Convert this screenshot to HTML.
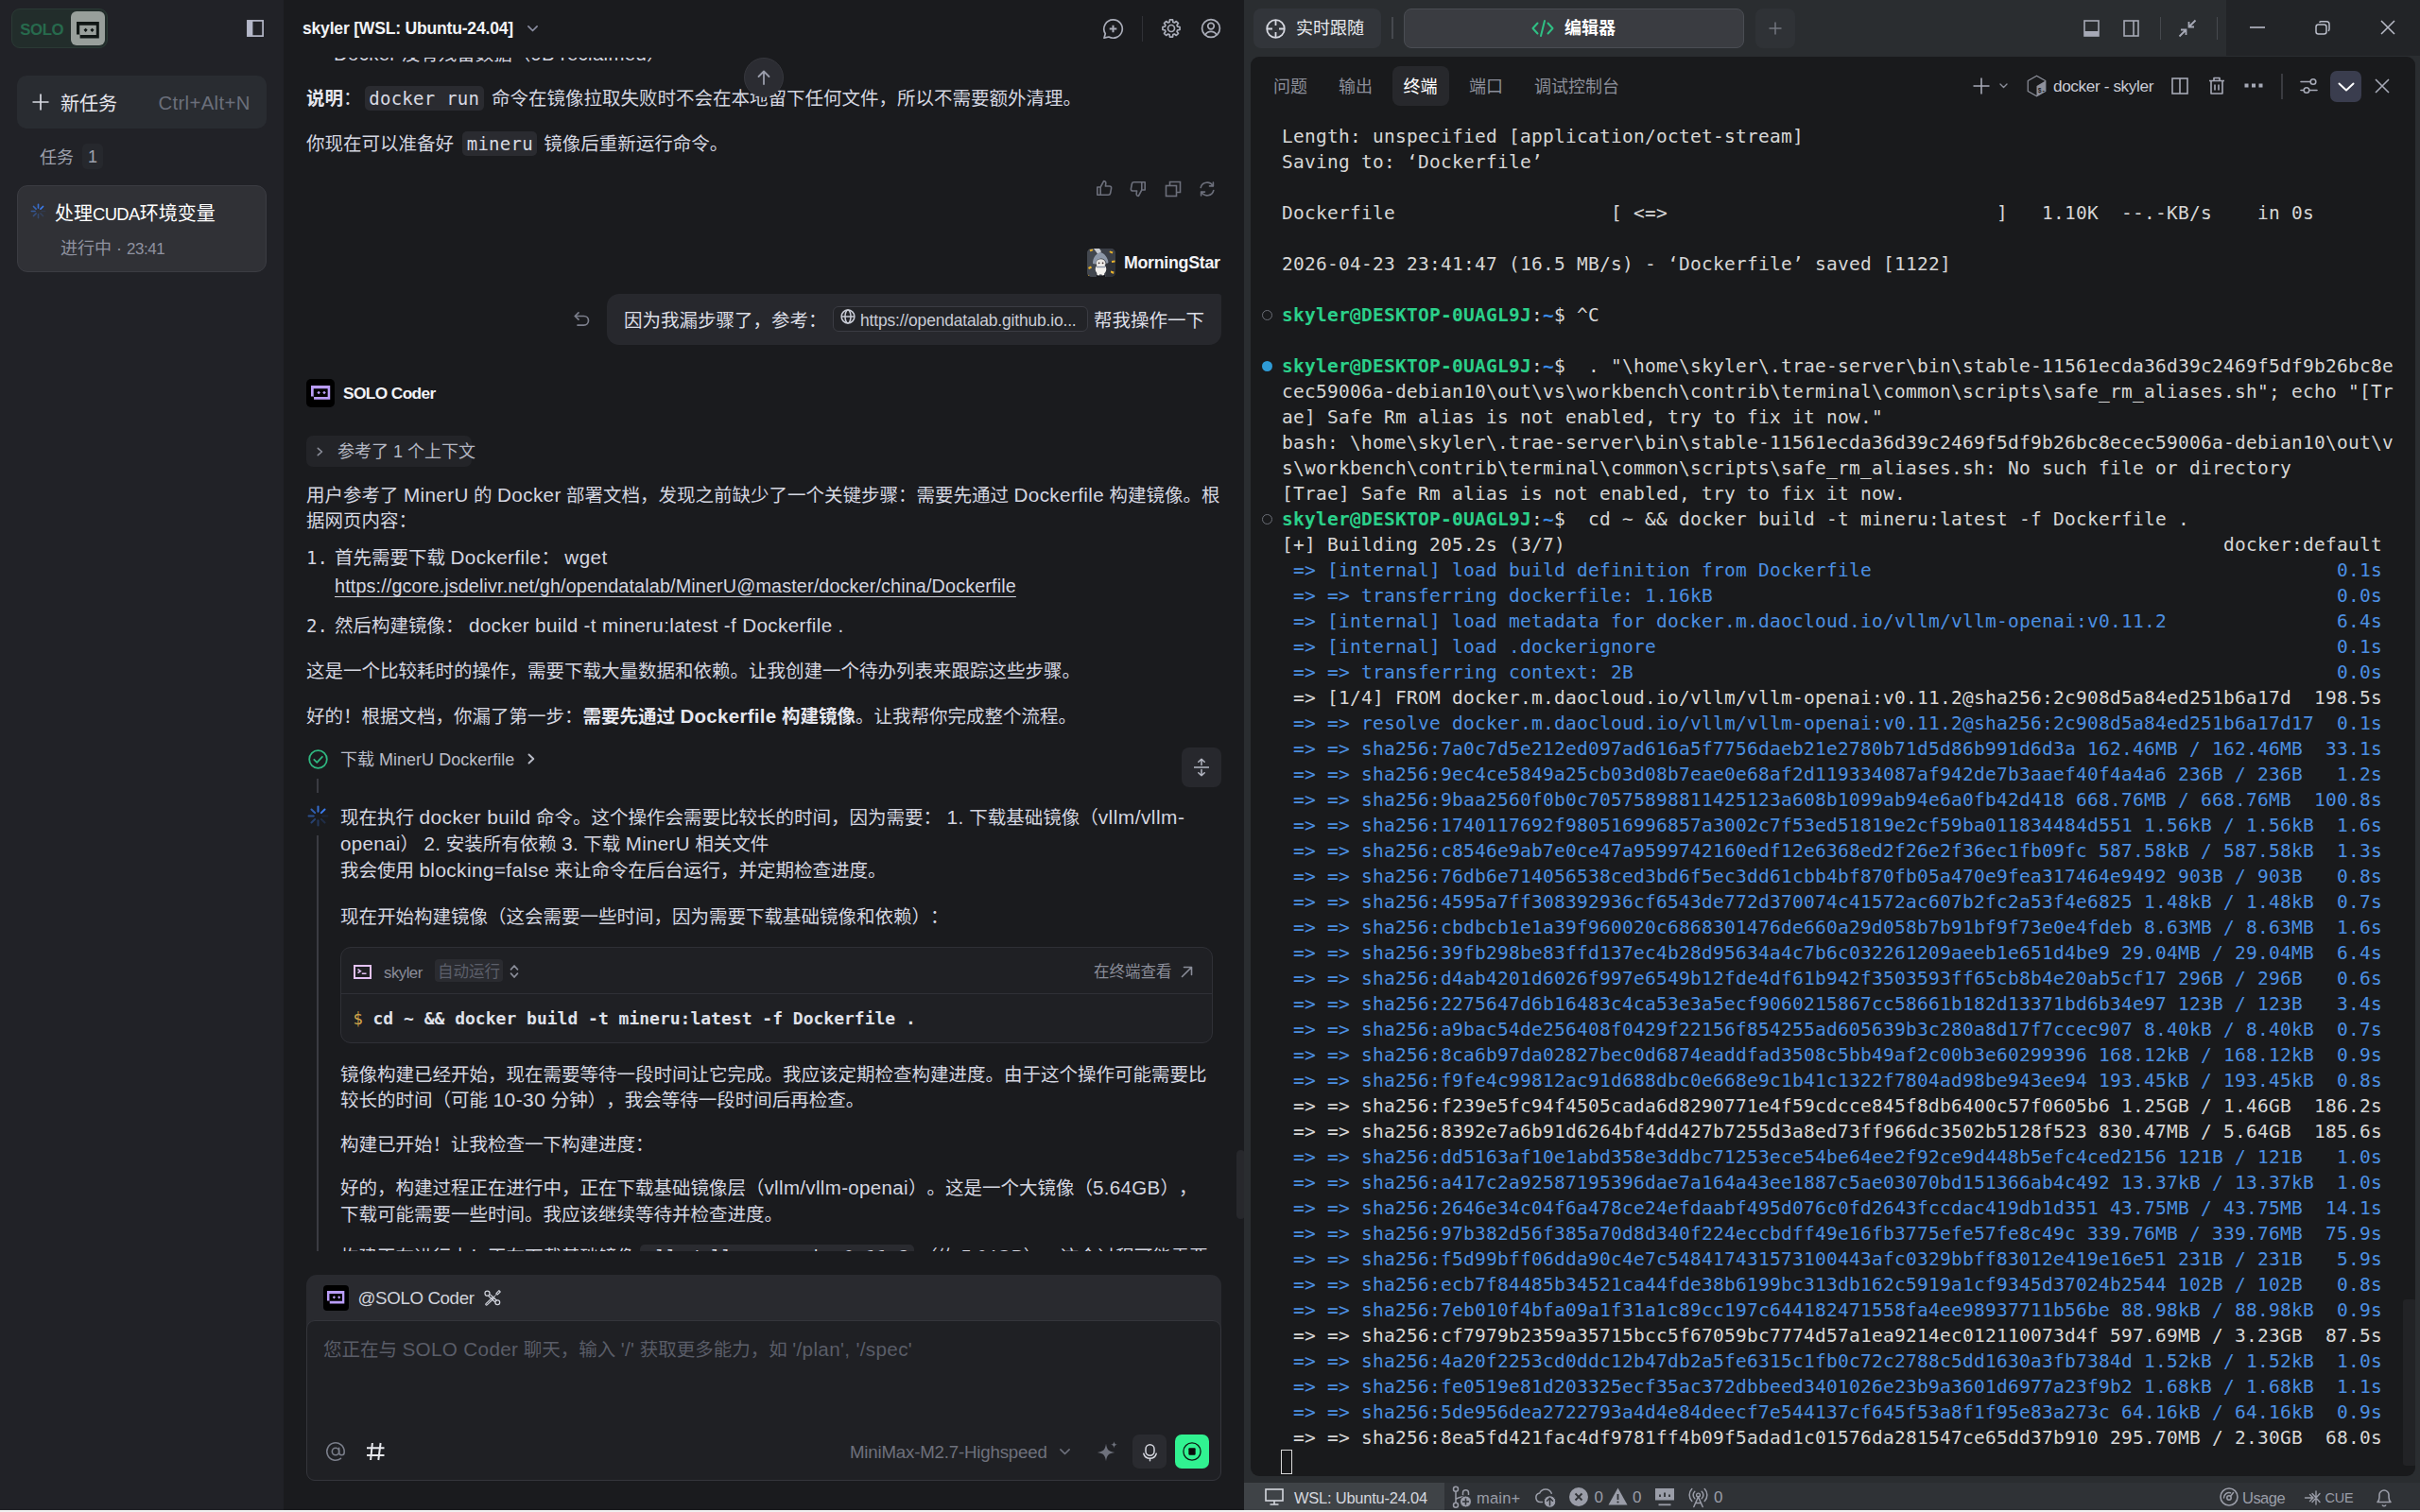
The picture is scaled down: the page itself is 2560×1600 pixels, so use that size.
<!DOCTYPE html>
<html lang="zh-CN"><head><meta charset="utf-8"><title>SOLO</title>
<style>
*{box-sizing:border-box;margin:0;padding:0}
html,body{width:2560px;height:1600px;overflow:hidden;background:#1a1b1e}
body{position:relative;text-spacing-trim:space-all;font-family:"Liberation Sans","Noto Sans CJK SC",sans-serif;color:#d4d6e0;font-size:19.5px;-webkit-font-smoothing:antialiased}
.abs{position:absolute}
svg{display:block;overflow:visible}
.mono{font-family:"DejaVu Sans Mono","Liberation Mono",monospace}
.nw{white-space:nowrap}
/* ---------- sidebar ---------- */
#sidebar{position:absolute;left:0;top:0;width:300px;height:1598px;background:#212227}
#solo{position:absolute;left:12px;top:9px;width:102px;height:42px;border-radius:9px;background:#222d2b;border:1px solid #2b3a35}
#solo .t{position:absolute;left:8.300px;top:0;height:40px;line-height:41px;font-size:19px;font-weight:bold;color:#276a4d;}
#solo .k{position:absolute;left:62px;top:2px;width:36.3px;height:36.3px;border-radius:6px;background:#989f9b}
#sbtog{position:absolute;left:261px;top:21px}
#newtask{position:absolute;left:18px;top:80px;width:264px;height:56px;border-radius:10px;background:#292c31}
#newtask .p{position:absolute;left:16px;top:19px}
#newtask .t{position:absolute;left:46px;top:0;line-height:60px;font-size:20px;color:#e6e7ee}
#newtask .s{position:absolute;right:17.300px;top:0;line-height:59.500px;font-size:19.5px;color:#6b6f7b;}
#tasklbl{position:absolute;left:42px;top:153.500px;line-height:27px;font-size:18px;color:#9da0ac}
#taskcnt{position:absolute;left:87px;top:152px;width:22px;height:27px;border-radius:5px;background:#26282d;color:#9da0ac;font-size:18px;line-height:28.500px;text-align:center}
#task{position:absolute;left:18px;top:196px;width:264px;height:92px;border-radius:11px;background:#303136;border:1px solid #3b3c42}
#task .sp{position:absolute;left:14px;top:19px}
#task .t{position:absolute;left:39px;top:15px;line-height:28px;font-size:20px;color:#fff;white-space:nowrap}
#task .s{position:absolute;left:45px;top:52px;line-height:28px;font-size:18px;color:#8f92a0;white-space:nowrap}
/* ---------- chat ---------- */
#chat{position:absolute;left:300px;top:0;width:1016px;height:1598px;background:#1a1b1e;overflow:hidden}
#chat .hd{position:absolute;left:20px;top:15px;line-height:30px;font-size:18.5px;font-weight:bold;color:#f2f3f7;white-space:nowrap;}
#msgs{position:absolute;left:0;top:60.8px;width:1016px;height:1263.7px;overflow:hidden}
#msgs .in{position:absolute;left:0;top:-60.8px;width:1016px}
.ln{position:absolute;white-space:nowrap;line-height:28px;height:28px;color:#d4d6e0;font-size:19.5px}
.ln b{color:#e6e7ef}
.ln u{text-underline-offset:3.5px;text-decoration-thickness:1.2px}
.l{letter-spacing:0}
code{font-family:"DejaVu Sans Mono","Liberation Mono",monospace;font-size:19px;background:#2a2b30;border-radius:5px;padding:2px 4.3px 2px;letter-spacing:0.26px;color:#d8dae3}
.ic{position:absolute}
#totop{position:absolute;left:487px;top:61px;width:42px;height:42px;border-radius:21px;background:#2b2c32;border:1px solid #36373d}
#bubble{position:absolute;left:342px;top:311px;width:650px;height:54px;border-radius:13px 3px 13px 13px;background:#27282d}
#chip{position:absolute;left:581px;top:323.800px;width:269.500px;height:27.500px;border-radius:6px;border:1px solid #3b3c43;background:#222327}
#ctx{position:absolute;left:24px;top:461px;width:175px;height:33px;border-radius:7px;background:#232428}
#ava1{position:absolute;left:24px;top:401px;width:30px;height:30px;border-radius:5px;background:#000}
#ava0{position:absolute;left:850px;top:263px;width:30px;height:30px;border-radius:5px;background:#3a3d44;overflow:hidden}
#vline{position:absolute;left:35px;top:884px;width:1.5px;height:460px;background:#3a3b42}
#vline0{position:absolute;left:35px;top:824px;width:1.5px;height:14.500px;background:#3a3b42}
#collapse{position:absolute;left:950px;top:791px;width:42px;height:42px;border-radius:8px;background:#27282d}
#card{position:absolute;left:60px;top:1002px;width:923px;height:102px;border-radius:11px;background:#1f2024;border:1px solid #2f3036}
#card .dv{position:absolute;left:0;top:48px;width:100%;height:1px;background:#2f3036}
#auto{position:absolute;left:99px;top:12px;width:72px;height:24px;border-radius:4px;background:#2a2b30}
#inp{position:absolute;left:24px;top:1349px;width:968px;height:218px;border-radius:11px;background:#292a2f}
#inp .box{position:absolute;left:0;top:47.500px;width:968px;height:170.500px;border-radius:9px;background:#1f2024;border:1px solid #34353b}
#ava2{position:absolute;left:18px;top:10.5px;width:27px;height:27px;border-radius:4px;background:#000}
#mic{position:absolute;left:898px;top:1518px;width:36px;height:36px;border-radius:7px;background:#2a2b30}
#stop{position:absolute;left:943px;top:1518px;width:36px;height:36px;border-radius:7px;background:#31f291}
#sbar{position:absolute;left:1007.5px;top:1217px;width:9px;height:73px;border-radius:5px;background:#27282c}
/* ---------- right ---------- */
#right{position:absolute;left:1316px;top:0;width:1244px;height:1598px;background:#2a2d30}
#wctl{position:absolute;left:1039px;top:0;width:205px;height:59px;background:#222427}
#follow{position:absolute;left:10px;top:9px;width:135px;height:42px;border-radius:8px;background:#32353a}
#editor{position:absolute;left:169px;top:9px;width:360px;height:42px;border-radius:8px;background:#3a3c41;border:1px solid #4a4d53}
#plus{position:absolute;left:541px;top:9px;width:42px;height:42px;border-radius:8px;background:#2f3236}
.vsep{position:absolute;width:1.5px;background:#46494e}
#term{position:absolute;left:7px;top:60px;width:1232px;height:1502px;border-radius:9px;background:#191a1c;overflow:hidden}
.tab{position:absolute;top:17px;line-height:30px;font-size:18px;color:#8b8e99;white-space:nowrap}
#tabact{position:absolute;left:150px;top:10px;width:60px;height:42px;border-radius:8px;background:#27282c}
#tdown{position:absolute;left:1142px;top:15px;width:33px;height:33px;border-radius:7px;background:#3a3d4e}
#tt{position:absolute;left:33px;top:70.600px;width:1190px}
.tl{height:27px;line-height:27px;white-space:pre;font-family:"DejaVu Sans Mono","Liberation Mono",monospace;font-size:19.5px;letter-spacing:0.26px;color:#d6d6d6;position:relative}
.tl.bl{color:#4b8fe2}
.tl b.g{color:#2bd08a}
.tl b.b{color:#3b8eea}
.mk{position:absolute;left:-21px;top:8px;width:11px;height:11px;border-radius:6px;box-sizing:border-box}
.mk.o{border:1.5px solid #6b6e76}
.mk.f{background:#2f9bd6}
#cursor{position:absolute;left:32px;top:1474px;width:12px;height:26px;border:1.2px solid #d8d8d8}
#tsb{position:absolute;left:1219px;top:1315px;width:14px;height:176px;background:#222326;border-radius:3px}
#status{position:absolute;left:0;top:1569px;width:1244px;height:29px;background:#2f3236}
#wsl{position:absolute;left:0;top:0;width:212px;height:29px;background:#3f4347}
.st{position:absolute;top:0;line-height:32px;font-size:17px;color:#9a9da8;white-space:nowrap}
#strip{position:absolute;left:0;top:1598px;width:2560px;height:2px;background:#f1f1f1}

.ib{display:inline-block}

#Hd .l{letter-spacing:-0.21px;font-size:0.950em}
#L11b .l{letter-spacing:0.50px;font-size:1.071em}
#L13a .l{letter-spacing:0.34px;font-size:1.052em}
#L3a .l{letter-spacing:0.36px;font-size:1.061em}
#L4a .l{letter-spacing:0.43px;font-size:1.058em}
#L4b .l{letter-spacing:0.13px;font-size:1.015em}
#L5 .l{letter-spacing:0.34px;font-size:1.061em}
#L7 .l{letter-spacing:0.30px;font-size:1.051em}
#L8 .l{letter-spacing:0.03px;font-size:0.999em}
#L9a .l{letter-spacing:0.46px;font-size:1.072em}
#L9b .l{letter-spacing:0.34px;font-size:1.052em}
#L9c .l{letter-spacing:0.40px;font-size:1.066em}
#Lc1 .l{letter-spacing:-0.50px;font-size:0.931em}
#Lctx .l{letter-spacing:0.00px;font-size:1.000em}
#Li1 .l{letter-spacing:-0.36px;font-size:0.959em}
#Li2 .l{letter-spacing:0.34px;font-size:1.061em}
#Li5 .l{letter-spacing:-0.18px;font-size:0.957em}
#Lms .l{letter-spacing:-0.27px;font-size:0.961em}
#Ls1 .l{letter-spacing:-0.23px;font-size:0.970em}
#Ls2 .l{letter-spacing:0.20px;font-size:0.970em}
#Ls3 .l{letter-spacing:-0.52px;font-size:0.970em}
#Ls4 .l{letter-spacing:-0.17px;font-size:0.850em}
#Lsc .l{letter-spacing:-0.60px;font-size:0.935em}
#Ltop .l{letter-spacing:0.33px;font-size:1.044em}
#Ltt .l{letter-spacing:-0.37px;font-size:0.928em}
#Lu2 .l{letter-spacing:-0.16px;font-size:0.970em}
#Sk .l{letter-spacing:0.35px;font-size:1.043em}
#So .l{letter-spacing:-0.38px;font-size:0.883em}
#Ss .l{letter-spacing:-0.40px;font-size:0.941em}
#St .l{letter-spacing:-0.62px;font-size:0.921em}
</style></head>
<body>
<div id="sidebar">
  <div id="solo"><div class="t" id="So"><span class="l">SOLO</span></div><div class="k"><div class="abs" style="left:6px;top:11.2px"><svg width="23.80" height="17.50" viewBox="0 0 23.8 17.5" fill="none" ><path fill-rule="evenodd" d="M0 0H23.8V17.5H3.6V13.5H0ZM3.2 3.8H20.8V14.1H3.2Z" fill="#0f1614"/><path d="M9.6 6.7l2.1 2.1-2.1 2.1-2.1-2.1zM16.5 6.7l2.1 2.1-2.1 2.1-2.1-2.1z" fill="#0f1614"/></svg></div></div></div>
  <div id="sbtog"><svg width="18" height="18" viewBox="0 0 18 18" fill="none" ><rect x="0.900" y="0.900" width="16.200" height="16.200" stroke="#b5b8c9" stroke-width="1.700"/><rect x="0.900" y="0.900" width="5.500" height="16.200" fill="#b5b8c9"/></svg></div>
  <div id="newtask"><div class="p"><svg width="18" height="18" viewBox="0 0 18 18" fill="none" ><path d="M9 0.500V17.500M0.500 9H17.500" stroke="#d8dae2" stroke-width="1.700"/></svg></div><div class="t">新任务</div><div class="s" id="Sk"><span class="l">Ctrl+Alt+N</span></div></div>
  <div id="tasklbl">任务</div><div id="taskcnt"><span class="l">1</span></div>
  <div id="task"><div class="sp"><svg width="15.0" height="15.0" viewBox="0 0 15.0 15.0" fill="none" ><path d="M9.89 5.11L12.54 2.46" stroke="#3b7df0" stroke-opacity="1.00" stroke-width="1.6" stroke-linecap="round"/><path d="M7.50 4.12L7.50 0.38" stroke="#3b7df0" stroke-opacity="0.85" stroke-width="1.6" stroke-linecap="round"/><path d="M5.11 5.11L2.46 2.46" stroke="#3b7df0" stroke-opacity="0.70" stroke-width="1.6" stroke-linecap="round"/><path d="M4.12 7.50L0.38 7.50" stroke="#3b7df0" stroke-opacity="0.55" stroke-width="1.6" stroke-linecap="round"/><path d="M5.11 9.89L2.46 12.54" stroke="#3b7df0" stroke-opacity="0.40" stroke-width="1.6" stroke-linecap="round"/><path d="M7.50 10.88L7.50 14.62" stroke="#3b7df0" stroke-opacity="0.30" stroke-width="1.6" stroke-linecap="round"/><path d="M9.89 9.89L12.54 12.54" stroke="#3b7df0" stroke-opacity="0.20" stroke-width="1.6" stroke-linecap="round"/><path d="M10.88 7.50L14.62 7.50" stroke="#3b7df0" stroke-opacity="0.12" stroke-width="1.6" stroke-linecap="round"/></svg></div><div class="t" id="St">处理<span class="l">CUDA</span>环境变量</div><div class="s" id="Ss">进行中 · <span class="l">23:41</span></div></div>
</div>
<div id="chat">
 <div class="hd" id="Hd"><span class="l">skyler [WSL: Ubuntu-24.04]</span></div>
 <div class="ic" style="left:257.500px;top:26.800px"><svg width="11" height="7" viewBox="0 0 11 7" fill="none" ><path d="M0.900 0.900L5.500 5.500L10.100 0.900" stroke="#8a8da0" stroke-width="1.700" stroke-linecap="round" stroke-linejoin="round"/></svg></div>
 <div class="ic" style="left:865.5px;top:18.5px"><svg width="23" height="23" viewBox="0 0 23 23" fill="none" ><path d="M11.500 1.800a9.700 9.700 0 1 1-4.600 18.200L2 21.200l1.300-4.600A9.700 9.700 0 0 1 11.500 1.800z" stroke="#a9acb8" stroke-width="1.700" stroke-linejoin="round"/><path d="M11.500 7.700v7.600M7.700 11.500h7.600" stroke="#a9acb8" stroke-width="2" stroke-linecap="butt"/></svg></div>
 <div class="vsep" style="left:907.5px;top:17px;height:27px;background:#303137"></div>
 <div class="ic" style="left:927.5px;top:19px"><svg width="22" height="22" viewBox="0 0 22 22" fill="none" ><path d="M9.16 4.35L9.48 1.93L12.52 1.93L12.84 4.35L14.40 4.99L16.34 3.51L18.49 5.66L17.01 7.60L17.65 9.16L20.07 9.48L20.07 12.52L17.65 12.84L17.01 14.40L18.49 16.34L16.34 18.49L14.40 17.01L12.84 17.65L12.52 20.07L9.48 20.07L9.16 17.65L7.60 17.01L5.66 18.49L3.51 16.34L4.99 14.40L4.35 12.84L1.93 12.52L1.93 9.48L4.35 9.16L4.99 7.60L3.51 5.66L5.66 3.51L7.60 4.99Z" stroke="#a9acb8" stroke-width="1.700" stroke-linejoin="round"/><circle cx="11" cy="11" r="3.500" stroke="#a9acb8" stroke-width="1.700"/></svg></div>
 <div class="ic" style="left:969.5px;top:19px"><svg width="22" height="22" viewBox="0 0 22 22" fill="none" ><circle cx="11" cy="11" r="9.400" stroke="#a9acb8" stroke-width="1.700"/><circle cx="11" cy="8.600" r="3.300" stroke="#a9acb8" stroke-width="1.700"/><path d="M5 18c1.300-2.500 3.400-3.600 6-3.600s4.700 1.100 6 3.600" stroke="#a9acb8" stroke-width="1.700"/></svg></div>
 <div id="msgs"><div class="in">
  <div class="ln" id="Ltop" style="left:53.000px;top:42.7px"><span class="l">Docker</span> 没有残留数据（<span class="l">0B reclaimed</span>）</div>
  <div class="ln" id="L1" style="left:24px;top:90px"><b>说明</b>： <code style="margin:0 3px 0 -2px">docker run</code> 命令在镜像拉取失败时不会在本地留下任何文件，所以不需要额外清理。</div>
  <div class="ln" id="L2" style="left:24px;top:138px">你现在可以准备好 <code style="margin:0 1.5px 0 4px">mineru</code> 镜像后重新运行命令。</div>
  <div class="ic" style="left:859px;top:190px"><svg width="18" height="18" viewBox="0 0 18 18" fill="none" ><path d="M5.2 8L8.6 1.6c1.5 0 2.4 1 2.2 2.5L10.4 7h4.4c1.2 0 2 1 1.8 2.1l-1 5.4c-.2 1.1-1 1.8-2.1 1.8H5.2zM5.2 8H1.8v8.3h3.4" stroke="#6c6f7b" stroke-width="1.6" stroke-linejoin="round"/></svg></div>
  <div class="ic" style="left:895px;top:191px"><svg width="18" height="18" viewBox="0 0 18 18" fill="none" ><g transform="rotate(180 9 9)"><path d="M5.2 8L8.6 1.6c1.5 0 2.4 1 2.2 2.5L10.4 7h4.4c1.2 0 2 1 1.8 2.1l-1 5.4c-.2 1.1-1 1.8-2.1 1.8H5.2zM5.2 8H1.8v8.3h3.4" stroke="#6c6f7b" stroke-width="1.6" stroke-linejoin="round"/></g></svg></div>
  <div class="ic" style="left:931.5px;top:190.5px"><svg width="18" height="18" viewBox="0 0 18 18" fill="none" ><rect x="1.500" y="5.500" width="11" height="11" stroke="#6c6f7b" stroke-width="1.600"/><path d="M5.500 5.500v-4h11v11h-4" stroke="#6c6f7b" stroke-width="1.600" stroke-linejoin="miter"/></svg></div>
  <div class="ic" style="left:967.5px;top:190.5px"><svg width="18" height="18" viewBox="0 0 18 18" fill="none" ><g transform="translate(18 0) scale(-1 1)"><path d="M15.800 7.500A7 7 0 0 0 3 5.600M2.200 10.500A7 7 0 0 0 15 12.400" stroke="#6c6f7b" stroke-width="1.600" stroke-linecap="round"/><path d="M2.600 2v3.900h3.900M15.400 16v-3.900h-3.900" stroke="#6c6f7b" stroke-width="1.600" stroke-linecap="round" stroke-linejoin="round"/></g></svg></div>
  <div id="ava0"><svg width="30" height="30" viewBox="0 0 30 30" fill="none" ><rect width="30" height="30" fill="#3b3f47"/><rect x="0" y="0" width="9" height="30" fill="#484c55" opacity=".6"/><rect x="20" y="14" width="10" height="16" fill="#2e3138"/><path d="M7 0h6l2 3-3 4z" fill="#c9ccd2"/><path d="M6 16c0-7 4-11 8-12 4 1 8 5 8.500 11l-2 1c-1-4-3-5.500-6-5.500s-5 2-5.500 6z" fill="#8e98a8"/><ellipse cx="14.500" cy="15.500" rx="5" ry="4.300" fill="#e9e7e4"/><ellipse cx="14.500" cy="22" rx="5.800" ry="5.500" fill="#f3f1ee"/><rect x="10.500" y="25" width="2.600" height="3.500" rx="1.200" fill="#f3f1ee"/><rect x="15.500" y="25" width="2.600" height="3.500" rx="1.200" fill="#f3f1ee"/><circle cx="12.600" cy="15.300" r="0.900" fill="#3a2a2a"/><circle cx="16.600" cy="15.300" r="0.900" fill="#3a2a2a"/><path d="M10 19.500h9" stroke="#8e98a8" stroke-width="1.400"/><path d="M10 28c2 1.500 6 1.500 9 0v2h-9z" fill="#15161a"/><path d="M2.500 1.500l3-1 1 1.500-3 1.200zM24 2.500l3.500 1-1 2-3-1.500zM26 13l3.500-.5v2l-3.500.5zM1 20l3-1.500 1 2-3 1.500zM25 23.500l3.500 1-.5 2.500-3-1.500zM0.500 27.500l2 1-1.500 1z" fill="#e9b32c"/></svg></div>
  <div class="ln" id="Lms" style="left:889px;top:264px;font-weight:bold;font-size:18.5px;color:#f2f3f7"><span class="l">MorningStar</span></div>
  <div class="ic" style="left:307px;top:329px"><svg width="17" height="17" viewBox="0 0 17 17" fill="none" ><path d="M1.5 5.5h9.2a4.8 4.8 0 0 1 0 9.6H4" stroke="#7c7f8c" stroke-width="1.7" stroke-linecap="round" stroke-linejoin="round"/><path d="M5 1.8L1.3 5.5L5 9.2" stroke="#7c7f8c" stroke-width="1.7" stroke-linecap="round" stroke-linejoin="round"/></svg></div>
  <div id="bubble"></div>
  <div class="ln" id="Lu1" style="left:360px;top:325px;color:#dcdee6">因为我漏步骤了，参考：</div>
  <div id="chip"><div class="abs" style="left:7px;top:2px"><svg width="16" height="16" viewBox="0 0 16 16" fill="none" ><circle cx="8" cy="8" r="6.9" stroke="#c9ccd6" stroke-width="1.5"/><ellipse cx="8" cy="8" rx="3" ry="6.9" stroke="#c9ccd6" stroke-width="1.5"/><path d="M1.1 8h13.8" stroke="#c9ccd6" stroke-width="1.5"/></svg></div></div>
  <div class="ln" id="Lu2" style="left:610.000px;top:324.5px;font-size:18px;color:#c9ccd6"><span class="l">https://opendatalab.github.io...</span></div>
  <div class="ln" id="Lu3" style="left:857px;top:325px;color:#dcdee6">帮我操作一下</div>
  <div id="ava1"><div class="abs" style="left:4.6px;top:7px"><svg width="20.23" height="14.88" viewBox="0 0 23.8 17.5" fill="none" ><path fill-rule="evenodd" d="M0 0H23.8V17.5H3.6V13.5H0ZM3.2 3.8H20.8V14.1H3.2Z" fill="#b99cf7"/><path d="M9.6 6.7l2.1 2.1-2.1 2.1-2.1-2.1zM16.5 6.7l2.1 2.1-2.1 2.1-2.1-2.1z" fill="#b99cf7"/></svg></div></div>
  <div class="ln" id="Lsc" style="left:63px;top:401.500px;font-weight:bold;font-size:18.5px;color:#f2f3f7"><span class="l">SOLO Coder</span></div>
  <div id="ctx"><div class="abs" style="left:10.500px;top:11.500px"><svg width="7" height="10" viewBox="0 0 7 10" fill="none" ><path d="M1.3 1.3L5.5 5L1.3 8.7" stroke="#8a8d99" stroke-width="1.6" stroke-linecap="round" stroke-linejoin="round"/></svg></div></div>
  <div class="ln" id="Lctx" style="left:57px;top:463.500px;font-size:18px;color:#b4b7c3">参考了 <span class="l">1</span> 个上下文</div>
  <div class="ln" id="L3a" style="left:24px;top:510px">用户参考了 <span class="l">MinerU</span> 的 <span class="l">Docker</span> 部署文档，发现之前缺少了一个关键步骤：需要先通过 <span class="l">Dockerfile</span> 构建镜像。根</div>
  <div class="ln" id="L3b" style="left:24px;top:537px">据网页内容：</div>
  <div class="ln mono" id="L4n" style="left:24px;top:576px;font-size:19px">1.</div>
  <div class="ln" id="L4a" style="left:54px;top:576px">首先需要下载 <span class="l">Dockerfile</span>：  <span class="l">wget</span></div>
  <div class="ln" id="L4b" style="left:54px;top:606px"><u><span class="l">https://gcore.jsdelivr.net/gh/opendatalab/MinerU@master/docker/china/Dockerfile</span></u></div>
  <div class="ln mono" id="L5n" style="left:24px;top:648px;font-size:19px">2.</div>
  <div class="ln" id="L5" style="left:54px;top:648px">然后构建镜像：  <span class="l">docker build -t mineru:latest -f Dockerfile .</span></div>
  <div class="ln" id="L6" style="left:24px;top:696px">这是一个比较耗时的操作，需要下载大量数据和依赖。让我创建一个待办列表来跟踪这些步骤。</div>
  <div class="ln" id="L7" style="left:24px;top:744px">好的！根据文档，你漏了第一步：<b>需要先通过 <span class="l">Dockerfile</span> 构建镜像</b>。让我帮你完成整个流程。</div>
  <div class="ic" style="left:25.500px;top:792.500px"><svg width="21" height="21" viewBox="0 0 21 21" fill="none" ><circle cx="10.5" cy="10.5" r="9.3" stroke="#2fb780" stroke-width="1.8"/><path d="M6.3 10.8l3 3 5.6-6" stroke="#2fb780" stroke-width="1.8" stroke-linecap="round" stroke-linejoin="round"/></svg></div>
  <div class="ln" id="L8" style="left:60px;top:789.500px;font-size:18px;color:#b9bcc8">下载 <span class="l">MinerU Dockerfile</span></div>
  <div class="ic" style="left:258px;top:797px"><svg width="8" height="12" viewBox="0 0 8 12" fill="none" ><path d="M1.5 1.5L6.3 6L1.5 10.5" stroke="#b9bcc8" stroke-width="1.9" stroke-linecap="round" stroke-linejoin="round"/></svg></div>
  <div id="collapse"><div class="abs" style="left:12px;top:11px"><svg width="18" height="20" viewBox="0 0 18 20" fill="none" ><path d="M1 10h16" stroke="#b5b8c4" stroke-width="1.5"/><path d="M9 7.5V1.2M5.8 4.2L9 1.2l3.2 3M9 12.5v6.3M5.8 15.8L9 18.8l3.2-3" stroke="#b5b8c4" stroke-width="1.5" stroke-linecap="round" stroke-linejoin="round"/></svg></div></div>
  <div id="vline0"></div>
  <div class="ic" style="left:25.500px;top:853px"><svg width="21.0" height="21.0" viewBox="0 0 21.0 21.0" fill="none" ><path d="M13.84 7.16L17.55 3.45" stroke="#3b7df0" stroke-opacity="1.00" stroke-width="2" stroke-linecap="round"/><path d="M10.50 5.77L10.50 0.53" stroke="#3b7df0" stroke-opacity="0.85" stroke-width="2" stroke-linecap="round"/><path d="M7.16 7.16L3.45 3.45" stroke="#3b7df0" stroke-opacity="0.70" stroke-width="2" stroke-linecap="round"/><path d="M5.77 10.50L0.53 10.50" stroke="#3b7df0" stroke-opacity="0.55" stroke-width="2" stroke-linecap="round"/><path d="M7.16 13.84L3.45 17.55" stroke="#3b7df0" stroke-opacity="0.40" stroke-width="2" stroke-linecap="round"/><path d="M10.50 15.23L10.50 20.48" stroke="#3b7df0" stroke-opacity="0.30" stroke-width="2" stroke-linecap="round"/><path d="M13.84 13.84L17.55 17.55" stroke="#3b7df0" stroke-opacity="0.20" stroke-width="2" stroke-linecap="round"/><path d="M15.23 10.50L20.48 10.50" stroke="#3b7df0" stroke-opacity="0.12" stroke-width="2" stroke-linecap="round"/></svg></div>
  <div id="vline"></div>
  <div class="ln" id="L9a" style="left:60px;top:851px">现在执行 <span class="l">docker build</span> 命令。这个操作会需要比较长的时间，因为需要：  <span class="l">1.</span> 下载基础镜像（<span class="l">vllm/vllm-</span></div>
  <div class="ln" id="L9b" style="left:60px;top:879px"><span class="l">openai</span>）  <span class="l">2.</span> 安装所有依赖 <span class="l">3.</span> 下载 <span class="l">MinerU</span> 相关文件</div>
  <div class="ln" id="L9c" style="left:60px;top:907px">我会使用 <span class="l">blocking=false</span> 来让命令在后台运行，并定期检查进度。</div>
  <div class="ln" id="L10" style="left:60px;top:955.500px">现在开始构建镜像（这会需要一些时间，因为需要下载基础镜像和依赖）<span class="ib">：</span></div>
  <div id="card">
    <div class="abs" style="left:13px;top:17.600px"><svg width="19" height="15" viewBox="0 0 19 15" fill="none" ><rect x="1" y="1" width="17" height="13" stroke="#e4c2f6" stroke-width="2"/><path d="M4.500 4.700l2.800 2-2.800 2M8.800 9.300h4.700" stroke="#e4c2f6" stroke-width="1.600"/></svg></div>
    <div class="ln" id="Lc1" style="left:45px;top:11.500px;font-size:18px;color:#8a8d99"><span class="l">skyler</span></div>
    <div id="auto"></div>
    <div class="ln" id="Lc2" style="left:102px;top:11.300px;font-size:16.500px;color:#5c5f6a">自动运行</div>
    <div class="abs" style="left:178px;top:17px"><svg width="10" height="16" viewBox="0 0 10 16" fill="none" ><path d="M1.5 5.8L5 2l3.5 3.8M1.5 10.2L5 14l3.5-3.8" stroke="#8a8d99" stroke-width="1.7" stroke-linecap="round" stroke-linejoin="round"/></svg></div>
    <div class="ln" id="Lc3" style="left:796px;top:11px;font-size:16.500px;color:#8a8d99">在终端查看</div>
    <div class="abs" style="left:888px;top:19px"><svg width="13" height="13" viewBox="0 0 13 13" fill="none" ><path d="M1.5 11.5L11.5 1.5M3.5 1.5h8v8" stroke="#8a8d99" stroke-width="1.6" stroke-linecap="round" stroke-linejoin="round"/></svg></div>
    <div class="dv"></div>
    <div class="ln mono" id="Lc4" style="left:12.500px;top:61px;font-size:17px;color:#d2a54a">$</div>
    <div class="ln mono" id="Lc5" style="left:33.500px;top:61px;font-size:18px;font-weight:bold;color:#dfe1ea">cd ~ &amp;&amp; docker build -t mineru:latest -f Dockerfile .</div>
  </div>
  <div class="ln" id="L11a" style="left:60px;top:1122.500px">镜像构建已经开始，现在需要等待一段时间让它完成。我应该定期检查构建进度。由于这个操作可能需要比</div>
  <div class="ln" id="L11b" style="left:60px;top:1150px">较长的时间（可能 <span class="l">10-30</span> 分钟）<span class="ib">，</span>我会等待一段时间后再检查。</div>
  <div class="ln" id="L12" style="left:60px;top:1196.500px">构建已开始！让我检查一下构建进度：</div>
  <div class="ln" id="L13a" style="left:60px;top:1243px">好的，构建过程正在进行中，正在下载基础镜像层（<span class="l">vllm/vllm-openai</span>）<span class="ib">。</span>这是一个大镜像（<span class="l">5.64GB</span>）<span class="ib">，</span></div>
  <div class="ln" id="L13b" style="left:60px;top:1270.500px">下载可能需要一些时间。我应该继续等待并检查进度。</div>
  <div class="ln" id="L14" style="left:60px;top:1315.500px">构建正在进行中！正在下载基础镜像 <code>vllm/vllm-openai:v0.11.2</code> （约 <span class="l">5.64GB</span>）<span class="ib">。</span>这个过程可能需要</div>
 </div></div>
 <div id="totop"><div class="abs" style="left:13px;top:12px"><svg width="14" height="16" viewBox="0 0 14 16" fill="none" ><path d="M7 15V1.5M1.5 7L7 1.5L12.5 7" stroke="#9a9dab" stroke-width="1.8" stroke-linecap="round" stroke-linejoin="round"/></svg></div></div>
 <div id="sbar"></div>
 <div id="inp">
   <div id="ava2"><div class="abs" style="left:4.200px;top:6.200px"><svg width="18.33" height="13.47" viewBox="0 0 23.8 17.5" fill="none" ><path fill-rule="evenodd" d="M0 0H23.8V17.5H3.6V13.5H0ZM3.2 3.8H20.8V14.1H3.2Z" fill="#b99cf7"/><path d="M9.6 6.7l2.1 2.1-2.1 2.1-2.1-2.1zM16.5 6.7l2.1 2.1-2.1 2.1-2.1-2.1z" fill="#b99cf7"/></svg></div></div>
   <div class="ln" id="Li1" style="left:54.500px;top:9.500px;color:#d0d3dc"><span class="l">@SOLO Coder</span></div>
   <div class="abs" style="left:187.800px;top:16px"><svg width="18" height="17" viewBox="0 0 18 17" fill="none" ><circle cx="3.500" cy="3.700" r="2.500" stroke="#d0d3dc" stroke-width="1.250"/><circle cx="14.300" cy="13.300" r="2.400" stroke="#d0d3dc" stroke-width="1.250"/><path d="M4.600 6.300L11.900 13M6.300 4.600L13.600 11.300" stroke="#d0d3dc" stroke-width="1.250"/><path d="M15.900 0.700l1.300 1.300-2.900 2.900-1.300-1.300z" stroke="#d0d3dc" stroke-width="1.150" stroke-linejoin="round"/><path d="M13.200 4.700L10.800 7.100" stroke="#d0d3dc" stroke-width="1.200" stroke-dasharray="1.200 0.900"/><path d="M9.600 7.300l1.200 1.200-7.600 7.400a.850.850 0 0 1-1.200-1.200z" stroke="#d0d3dc" stroke-width="1.150" stroke-linejoin="round"/></svg></div>
   <div class="box"></div>
   <div class="ln" id="Li2" style="left:18.000px;top:65px;color:#5a5d68">您正在与 <span class="l">SOLO Coder</span> 聊天，输入 <span class="l">'/'</span> 获取更多能力，如 <span class="l">'/plan', '/spec'</span></div>
   <div class="abs" style="left:20px;top:175.800px"><svg width="22" height="22" viewBox="0 0 24 24" fill="none" ><circle cx="12" cy="12" r="4" stroke="#7a7e8a" stroke-width="1.700"/><path d="M16 8v5a3 3 0 0 0 6 0v-1a10 10 0 1 0-4 8" stroke="#7a7e8a" stroke-width="1.700" stroke-linecap="round"/></svg></div>
   <div class="abs" style="left:63.700px;top:177.800px"><svg width="18.5" height="18" viewBox="0 0 18.5 18" fill="none" ><path d="M0 5.200H18.500M0 12.900H18.500M5.900 0L4.100 18M14.600 0L12.300 18" stroke="#e8e9ee" stroke-width="2"/></svg></div>
   <div class="ln" id="Li5" style="left:575.000px;top:173px;color:#6e717c"><span class="l">MiniMax-M2.7-Highspeed</span></div>
   <div class="abs" style="left:796.500px;top:183.500px"><svg width="11" height="7" viewBox="0 0 11 7" fill="none" ><path d="M0.900 0.900L5.500 5.500L10.100 0.900" stroke="#6c6f7b" stroke-width="1.700" stroke-linecap="round" stroke-linejoin="round"/></svg></div>
 </div>
 <div class="ic" style="left:861px;top:1525px"><svg width="22" height="22" viewBox="0 0 22 22" fill="none" ><path d="M9.00 2.80 C9.92 9.24 11.76 11.08 18.20 12.00 C11.76 12.92 9.92 14.76 9.00 21.20 C8.08 14.76 6.24 12.92 -0.20 12.00 C6.24 11.08 8.08 9.24 9.00 2.80Z" fill="#6e717c"/><path d="M17.50 0.20 C17.86 2.72 18.58 3.44 21.10 3.80 C18.58 4.16 17.86 4.88 17.50 7.40 C17.14 4.88 16.42 4.16 13.90 3.80 C16.42 3.44 17.14 2.72 17.50 0.20Z" fill="#6e717c"/></svg></div>
 <div id="mic"><div class="abs" style="left:10.500px;top:9.500px"><svg width="15" height="18" viewBox="0 0 15 18" fill="none" ><rect x="3" y="0.700" width="9" height="11.600" rx="4.500" stroke="#d6d8e0" stroke-width="1.500"/><path d="M0.800 10.300c.900 3.300 3.400 5 6.700 5s5.800-1.700 6.700-5M7.500 15.300v2.400" stroke="#d6d8e0" stroke-width="1.500" stroke-linecap="round"/></svg></div></div>
 <div id="stop"><div class="abs" style="left:7.600px;top:8.400px"><svg width="20" height="20" viewBox="0 0 20 20" fill="none" ><circle cx="10" cy="10" r="9.100" stroke="#0d1a12" stroke-width="1.300"/><rect x="6.350" y="6.350" width="7.300" height="7.300" rx="0.800" fill="#0b0b0b"/></svg></div></div>
</div>
<div id="right">
 <div id="wctl"></div>
 <div id="follow"><div class="abs" style="left:13px;top:10.500px"><svg width="21" height="21" viewBox="0 0 21 21" fill="none" ><circle cx="10.500" cy="10.500" r="9.300" stroke="#d6d8e0" stroke-width="1.800"/><path d="M10.500 1v6M10.500 14v6M1 10.500h6M14 10.500h6" stroke="#d6d8e0" stroke-width="1.800"/></svg></div><div class="abs nw" style="left:45px;top:6px;line-height:30px;font-size:18px;color:#e8e9ee">实时跟随</div></div>
 <div class="vsep" style="left:156px;top:18px;height:23px"></div>
 <div id="editor"><div class="abs" style="left:134px;top:11px"><svg width="24" height="18" viewBox="0 0 24 18" fill="none" ><path d="M6.500 3.500L1.500 9l5 5.500M17.500 3.500l5 5.500-5 5.500M14 1L10 17" stroke="#2fc084" stroke-width="2" stroke-linecap="round" stroke-linejoin="round"/></svg></div><div class="abs nw" style="left:169px;top:5px;line-height:30px;font-size:18px;font-weight:bold;color:#fff">编辑器</div></div>
 <div id="plus"><div class="abs" style="left:14px;top:14px"><svg width="14" height="14" viewBox="0 0 14 14" fill="none" ><path d="M7 0.500v13M0.500 7h13" stroke="#73767f" stroke-width="1.500"/></svg></div></div>
 <div class="abs" style="left:888px;top:21px"><svg width="17" height="18" viewBox="0 0 17 18" fill="none" ><rect x="1" y="1" width="15" height="16" stroke="#a6a9b6" stroke-width="1.600"/><rect x="1" y="12" width="15" height="5" fill="#a6a9b6"/></svg></div>
 <div class="abs" style="left:930px;top:21px"><svg width="17" height="18" viewBox="0 0 17 18" fill="none" ><rect x="1" y="1" width="15" height="16" stroke="#a6a9b6" stroke-width="1.600"/><path d="M11 1v16" stroke="#a6a9b6" stroke-width="1.600"/></svg></div>
 <div class="vsep" style="left:968.500px;top:18px;height:24px"></div>
 <div class="abs" style="left:988px;top:20px"><svg width="20" height="20" viewBox="0 0 20 20" fill="none" ><path d="M11.500 8.500L18.500 1.500M11.500 3v5.500h5.500M8.500 11.500L1.500 18.500M8.500 17v-5.500H3" stroke="#a6a9b6" stroke-width="1.800" stroke-linecap="butt" stroke-linejoin="miter"/></svg></div>
 <div class="vsep" style="left:1028.500px;top:18px;height:24px"></div>
 <div class="abs" style="left:1064px;top:28px"><svg width="16" height="2" viewBox="0 0 16 2" fill="none" ><path d="M0 1h16" stroke="#b9bcc8" stroke-width="1.600"/></svg></div>
 <div class="abs" style="left:1133px;top:22px"><svg width="16" height="15" viewBox="0 0 16 15" fill="none" ><rect x="1" y="4" width="11" height="10" rx="2.500" stroke="#b9bcc8" stroke-width="1.500"/><path d="M4.500 1.800c.5-.7 1.200-1 2-1h5.500a3 3 0 0 1 3 3v5c0 .8-.3 1.500-1 2" stroke="#b9bcc8" stroke-width="1.500"/></svg></div>
 <div class="abs" style="left:1202px;top:21px"><svg width="16" height="16" viewBox="0 0 16 16" fill="none" ><path d="M1 1l14 14M15 1L1 15" stroke="#b9bcc8" stroke-width="1.500"/></svg></div>
 <div id="term">
   <div class="tab" style="left:24px">问题</div>
   <div class="tab" style="left:93px">输出</div>
   <div id="tabact"></div>
   <div class="tab" style="left:161.500px;color:#fff">终端</div>
   <div class="tab" style="left:231px">端口</div>
   <div class="tab" style="left:300px">调试控制台</div>
   <div class="abs" style="left:764px;top:21.700px"><svg width="18" height="18" viewBox="0 0 18 18" fill="none" ><path d="M9 0.500v17M0.500 9h17" stroke="#a6a9b6" stroke-width="1.600"/></svg></div>
   <div class="abs" style="left:792px;top:28.200px"><svg width="9" height="6" viewBox="0 0 9 6" fill="none" ><path d="M1 1l3.500 3.500L8 1" stroke="#8a8d99" stroke-width="1.400" stroke-linecap="round" stroke-linejoin="round"/></svg></div>
   <div class="abs" style="left:820.500px;top:18.700px"><svg width="21" height="24" viewBox="0 0 21 24" fill="none" ><path d="M10.500 1.200L19.800 6.500v11L10.500 22.800 1.200 17.500v-11z" stroke="#8f929d" stroke-width="1.200" stroke-linejoin="round"/><path d="M19.800 6.500L10.500 12v10.800l9.300-5.300z" fill="#8f929d"/><text x="11.800" y="18.500" font-size="6.500" fill="#191a1c" font-family="Liberation Mono,monospace" font-weight="bold">$-</text></svg></div>
   <div class="abs nw" id="Ltt" style="left:849px;top:16px;line-height:30px;font-size:18.500px;color:#c9ccd6"><span class="l">docker - skyler</span></div>
   <div class="abs" style="left:974px;top:21.700px"><svg width="18" height="18" viewBox="0 0 18 18" fill="none" ><rect x="1" y="1" width="16" height="16" stroke="#a6a9b6" stroke-width="1.600"/><path d="M9 1v16" stroke="#a6a9b6" stroke-width="1.600"/></svg></div>
   <div class="abs" style="left:1013px;top:20.700px"><svg width="18" height="20" viewBox="0 0 18 20" fill="none" ><path d="M1 4.500h16M6 4.500V1.500h6v3M3 4.500v13.500h12V4.500M7 8.500v6M11 8.500v6" stroke="#a6a9b6" stroke-width="1.600" stroke-linejoin="round"/></svg></div>
   <div class="abs" style="left:1050.500px;top:28.200px"><svg width="20" height="5" viewBox="0 0 20 5" fill="none" ><rect x="0.500" y="0.500" width="4" height="4" fill="#a6a9b6"/><rect x="8" y="0.500" width="4" height="4" fill="#a6a9b6"/><rect x="15.500" y="0.500" width="4" height="4" fill="#a6a9b6"/></svg></div>
   <div class="vsep" style="left:1090px;top:18px;height:27px;background:#3a3b40"></div>
   <div class="abs" style="left:1110px;top:21.700px"><svg width="19" height="18" viewBox="0 0 19 18" fill="none" ><path d="M1 4.500h10M1 13.500h3M10 13.500h8" stroke="#a6a9b6" stroke-width="1.600" stroke-linecap="round"/><circle cx="14" cy="4.500" r="2.800" stroke="#a6a9b6" stroke-width="1.600"/><circle cx="7" cy="13.500" r="2.800" stroke="#a6a9b6" stroke-width="1.600"/></svg></div>
   <div id="tdown"><div class="abs" style="left:7.500px;top:12px"><svg width="18" height="10" viewBox="0 0 18 10" fill="none" ><path d="M1.500 1.500L9 8.500l7.500-7" stroke="#fff" stroke-width="2" stroke-linecap="round" stroke-linejoin="round"/></svg></div></div>
   <div class="abs" style="left:1189px;top:22.700px"><svg width="16" height="16" viewBox="0 0 16 16" fill="none" ><path d="M1 1l14 14M15 1L1 15" stroke="#a6a9b6" stroke-width="1.600"/></svg></div>
   <div id="tt">
<div class="tl ">Length: unspecified [application/octet-stream]</div>
<div class="tl ">Saving to: ‘Dockerfile’</div>
<div class="tl ">&nbsp;</div>
<div class="tl ">Dockerfile                   [ &lt;=&gt;                             ]   1.10K  --.-KB/s    in 0s</div>
<div class="tl ">&nbsp;</div>
<div class="tl ">2026-04-23 23:41:47 (16.5 MB/s) - ‘Dockerfile’ saved [1122]</div>
<div class="tl ">&nbsp;</div>
<div class="tl "><i class="mk o"></i><b class="g">skyler@DESKTOP-0UAGL9J</b>:<b class="b">~</b>$ ^C</div>
<div class="tl ">&nbsp;</div>
<div class="tl "><i class="mk f"></i><b class="g">skyler@DESKTOP-0UAGL9J</b>:<b class="b">~</b>$  . "\home\skyler\.trae-server\bin\stable-11561ecda36d39c2469f5df9b26bc8e</div>
<div class="tl ">cec59006a-debian10\out\vs\workbench\contrib\terminal\common\scripts\safe_rm_aliases.sh"; echo "[Tr</div>
<div class="tl ">ae] Safe Rm alias is not enabled, try to fix it now."</div>
<div class="tl ">bash: \home\skyler\.trae-server\bin\stable-11561ecda36d39c2469f5df9b26bc8ecec59006a-debian10\out\v</div>
<div class="tl ">s\workbench\contrib\terminal\common\scripts\safe_rm_aliases.sh: No such file or directory</div>
<div class="tl ">[Trae] Safe Rm alias is not enabled, try to fix it now.</div>
<div class="tl "><i class="mk o"></i><b class="g">skyler@DESKTOP-0UAGL9J</b>:<b class="b">~</b>$  cd ~ &amp;&amp; docker build -t mineru:latest -f Dockerfile .</div>
<div class="tl ">[+] Building 205.2s (3/7)                                                          docker:default</div>
<div class="tl bl"> =&gt; [internal] load build definition from Dockerfile                                         0.1s</div>
<div class="tl bl"> =&gt; =&gt; transferring dockerfile: 1.16kB                                                       0.0s</div>
<div class="tl bl"> =&gt; [internal] load metadata for docker.m.daocloud.io/vllm/vllm-openai:v0.11.2               6.4s</div>
<div class="tl bl"> =&gt; [internal] load .dockerignore                                                            0.1s</div>
<div class="tl bl"> =&gt; =&gt; transferring context: 2B                                                              0.0s</div>
<div class="tl "> =&gt; [1/4] FROM docker.m.daocloud.io/vllm/vllm-openai:v0.11.2@sha256:2c908d5a84ed251b6a17d  198.5s</div>
<div class="tl bl"> =&gt; =&gt; resolve docker.m.daocloud.io/vllm/vllm-openai:v0.11.2@sha256:2c908d5a84ed251b6a17d17  0.1s</div>
<div class="tl bl"> =&gt; =&gt; sha256:7a0c7d5e212ed097ad616a5f7756daeb21e2780b71d5d86b991d6d3a 162.46MB / 162.46MB  33.1s</div>
<div class="tl bl"> =&gt; =&gt; sha256:9ec4ce5849a25cb03d08b7eae0e68af2d119334087af942de7b3aaef40f4a4a6 236B / 236B   1.2s</div>
<div class="tl bl"> =&gt; =&gt; sha256:9baa2560f0b0c70575898811425123a608b1099ab94e6a0fb42d418 668.76MB / 668.76MB  100.8s</div>
<div class="tl bl"> =&gt; =&gt; sha256:1740117692f980516996857a3002c7f53ed51819e2cf59ba011834484d551 1.56kB / 1.56kB  1.6s</div>
<div class="tl bl"> =&gt; =&gt; sha256:c8546e9ab7e0ce47a9599742160edf12e6368ed2f26e2f36ec1fb09fc 587.58kB / 587.58kB  1.3s</div>
<div class="tl bl"> =&gt; =&gt; sha256:76db6e714056538ced3bd6f5ec3dd61cbb4bf870fb05a470e9fea317464e9492 903B / 903B   0.8s</div>
<div class="tl bl"> =&gt; =&gt; sha256:4595a7ff308392936cf6543de772d370074c41572ac607b2fc2a53f4e6825 1.48kB / 1.48kB  0.7s</div>
<div class="tl bl"> =&gt; =&gt; sha256:cbdbcb1e1a39f960020c6868301476de660a29d058b7b91bf9f73e0e4fdeb 8.63MB / 8.63MB  1.6s</div>
<div class="tl bl"> =&gt; =&gt; sha256:39fb298be83ffd137ec4b28d95634a4c7b6c032261209aeeb1e651d4be9 29.04MB / 29.04MB  6.4s</div>
<div class="tl bl"> =&gt; =&gt; sha256:d4ab4201d6026f997e6549b12fde4df61b942f3503593ff65cb8b4e20ab5cf17 296B / 296B   0.6s</div>
<div class="tl bl"> =&gt; =&gt; sha256:2275647d6b16483c4ca53e3a5ecf9060215867cc58661b182d13371bd6b34e97 123B / 123B   3.4s</div>
<div class="tl bl"> =&gt; =&gt; sha256:a9bac54de256408f0429f22156f854255ad605639b3c280a8d17f7ccec907 8.40kB / 8.40kB  0.7s</div>
<div class="tl bl"> =&gt; =&gt; sha256:8ca6b97da02827bec0d6874eaddfad3508c5bb49af2c00b3e60299396 168.12kB / 168.12kB  0.9s</div>
<div class="tl bl"> =&gt; =&gt; sha256:f9fe4c99812ac91d688dbc0e668e9c1b41c1322f7804ad98be943ee94 193.45kB / 193.45kB  0.8s</div>
<div class="tl "> =&gt; =&gt; sha256:f239e5fc94f4505cada6d8290771e4f59cdcce845f8db6400c57f0605b6 1.25GB / 1.46GB  186.2s</div>
<div class="tl "> =&gt; =&gt; sha256:8392e7a6b91d6264bf4dd427b7255d3a8ed73ff966dc3502b5128f523 830.47MB / 5.64GB  185.6s</div>
<div class="tl bl"> =&gt; =&gt; sha256:dd5163af10e1abd358e3ddbc71253ece54be64ee2f92ce9d448b5efc4ced2156 121B / 121B   1.0s</div>
<div class="tl bl"> =&gt; =&gt; sha256:a417c2a92587195396dae7a164a43ee1887c5ae03070bd151366ab4c492 13.37kB / 13.37kB  1.0s</div>
<div class="tl bl"> =&gt; =&gt; sha256:2646e34c04f6a478ce24efdaabf495d076c0fd2643fccdac419db1d351 43.75MB / 43.75MB  14.1s</div>
<div class="tl bl"> =&gt; =&gt; sha256:97b382d56f385a70d8d340f224eccbdff49e16fb3775efe57fe8c49c 339.76MB / 339.76MB  75.9s</div>
<div class="tl bl"> =&gt; =&gt; sha256:f5d99bff06dda90c4e7c548417431573100443afc0329bbff83012e419e16e51 231B / 231B   5.9s</div>
<div class="tl bl"> =&gt; =&gt; sha256:ecb7f84485b34521ca44fde38b6199bc313db162c5919a1cf9345d37024b2544 102B / 102B   0.8s</div>
<div class="tl bl"> =&gt; =&gt; sha256:7eb010f4bfa09a1f31a1c89cc197c644182471558fa4ee98937711b56be 88.98kB / 88.98kB  0.9s</div>
<div class="tl "> =&gt; =&gt; sha256:cf7979b2359a35715bcc5f67059bc7774d57a1ea9214ec012110073d4f 597.69MB / 3.23GB  87.5s</div>
<div class="tl bl"> =&gt; =&gt; sha256:4a20f2253cd0ddc12b47db2a5fe6315c1fb0c72c2788c5dd1630a3fb7384d 1.52kB / 1.52kB  1.0s</div>
<div class="tl bl"> =&gt; =&gt; sha256:fe0519e81d203325ecf35ac372dbbeed3401026e23b9a3601d6977a23f9b2 1.68kB / 1.68kB  1.1s</div>
<div class="tl bl"> =&gt; =&gt; sha256:5de956dea2722793a4d4e84deecf7e544137cf645f53a8f1f95e83a273c 64.16kB / 64.16kB  0.9s</div>
<div class="tl "> =&gt; =&gt; sha256:8ea5fd421fac4df9781ff4b09f5adad1c01576da281547ce65dd37b910 295.70MB / 2.30GB  68.0s</div>
   </div>
   <div id="cursor"></div>
   <div id="tsb"></div>
 </div>
 <div id="status">
   <div id="wsl"><div class="abs" style="left:21.500px;top:6px"><svg width="20" height="18" viewBox="0 0 20 18" fill="none" ><rect x="1" y="1" width="18" height="12" stroke="#d5d7de" stroke-width="1.600"/><path d="M10 13v3.500M5.500 17h9" stroke="#d5d7de" stroke-width="1.600"/></svg></div><div class="st" id="Ls1" style="left:53px;color:#d5d7de"><span class="l">WSL: Ubuntu-24.04</span></div></div>
   <div class="abs" style="left:220px;top:3px"><svg width="22" height="24" viewBox="0 0 22 24" fill="none" ><circle cx="4" cy="3.800" r="2.500" stroke="#9a9da8" stroke-width="1.500"/><circle cx="4" cy="20.800" r="2.500" stroke="#9a9da8" stroke-width="1.500"/><path d="M4 6.300v12M4 15.500c0-3 6-2.500 8.500-4.500" stroke="#9a9da8" stroke-width="1.500"/><path d="M11.500 10V7.800a3 3 0 0 1 6 0V10" stroke="#9a9da8" stroke-width="1.500"/><circle cx="14.500" cy="17" r="6" fill="#9a9da8" stroke="#2f3236" stroke-width="1"/><path d="M14.500 13.500v7M11 17h7" stroke="#2f3236" stroke-width="1.600"/></svg></div>
   <div class="st" id="Ls2" style="left:246.000px"><span class="l">main+</span></div>
   <div class="abs" style="left:307px;top:6px"><svg width="24" height="21" viewBox="0 0 24 21" fill="none" ><path d="M8.500 14.500H6.500a4.800 4.800 0 0 1-.8-9.500A6.800 6.800 0 0 1 18.300 5.300" stroke="#9a9da8" stroke-width="1.500" stroke-linecap="round"/><circle cx="16.500" cy="14" r="6.300" fill="#9a9da8" stroke="#2f3236" stroke-width="1"/><path d="M16.500 17.800v-7M13.500 13.300l3-3 3 3" stroke="#2f3236" stroke-width="1.500" stroke-linecap="round" stroke-linejoin="round"/></svg></div>
   <div class="abs" style="left:343.500px;top:5px"><svg width="20" height="20" viewBox="0 0 20 20" fill="none" ><circle cx="10" cy="10" r="10" fill="#9a9da8"/><path d="M6.500 6.500l7 7M13.500 6.500l-7 7" stroke="#2f3236" stroke-width="1.800"/></svg></div>
   <div class="st" style="left:370.500px"><span class="l">0</span></div>
   <div class="abs" style="left:385px;top:5px"><svg width="21" height="19" viewBox="0 0 21 19" fill="none" ><path d="M10.500 0.500L20.500 18.500H0.500z" fill="#9a9da8"/><path d="M10.500 7v6" stroke="#2f3236" stroke-width="1.800"/><circle cx="10.500" cy="15.500" r="1.100" fill="#2f3236"/></svg></div>
   <div class="st" style="left:411px"><span class="l">0</span></div>
   <div class="abs" style="left:434.500px;top:6px"><svg width="20" height="19" viewBox="0 0 20 19" fill="none" ><rect x="0" y="0" width="20" height="12.500" fill="#9a9da8"/><path d="M5 9V6.500M10 9V4.500M15 9V6.500" stroke="#2f3236" stroke-width="1.800"/><path d="M3.500 17.300h13" stroke="#9a9da8" stroke-width="1.800"/></svg></div>
   <div class="abs" style="left:470px;top:4.500px"><svg width="21" height="21" viewBox="0 0 21 21" fill="none" ><path d="M6.800 11.800a5.200 5.200 0 0 1 0-7.600M14.200 11.800a5.200 5.200 0 0 0 0-7.600M3.800 14.500a9.300 9.300 0 0 1 0-13M17.200 14.500a9.300 9.300 0 0 0 0-13" stroke="#9a9da8" stroke-width="1.500" stroke-linecap="round"/><circle cx="10.500" cy="8" r="1.900" stroke="#9a9da8" stroke-width="1.400"/><path d="M10.500 10L5.800 20.500M10.500 10l4.700 10.500M7.500 16.500h6" stroke="#9a9da8" stroke-width="1.500" stroke-linecap="round"/></svg></div>
   <div class="st" style="left:497px"><span class="l">0</span></div>
   <div class="abs" style="left:1031.500px;top:5px"><svg width="20" height="20" viewBox="0 0 20 20" fill="none" ><circle cx="10" cy="10" r="9" stroke="#9a9da8" stroke-width="1.600"/><circle cx="10" cy="11" r="2.200" stroke="#9a9da8" stroke-width="1.500"/><path d="M11.500 9.500L14.500 5.500M4.500 11a5.500 5.500 0 0 1 7-5.200" stroke="#9a9da8" stroke-width="1.500" stroke-linecap="round"/></svg></div>
   <div class="st" id="Ls3" style="left:1056.000px"><span class="l">Usage</span></div>
   <div class="abs" style="left:1122px;top:7.500px"><svg width="17" height="16" viewBox="0 0 17 16" fill="none" ><path d="M0.500 8h8M5.500 4.500L9 8l-3.500 3.500M12 1v14M8 3.500l8 9M16 3.500l-8 9" stroke="#9a9da8" stroke-width="1.400" stroke-linecap="round"/></svg></div>
   <div class="st" id="Ls4" style="left:1143.500px"><span class="l">CUE</span></div>
   <div class="abs" style="left:1197px;top:5px"><svg width="18" height="20" viewBox="0 0 18 20" fill="none" ><path d="M2 15.500h14c-1.500-1.500-2-3-2-5V8a5 5 0 0 0-10 0v2.500c0 2-.5 3.500-2 5z" stroke="#9a9da8" stroke-width="1.600" stroke-linejoin="round"/><path d="M7 18.500a2.200 2.200 0 0 0 4 0" stroke="#9a9da8" stroke-width="1.600"/></svg></div>
 </div>
</div>

<div id="strip"></div>
</body></html>
